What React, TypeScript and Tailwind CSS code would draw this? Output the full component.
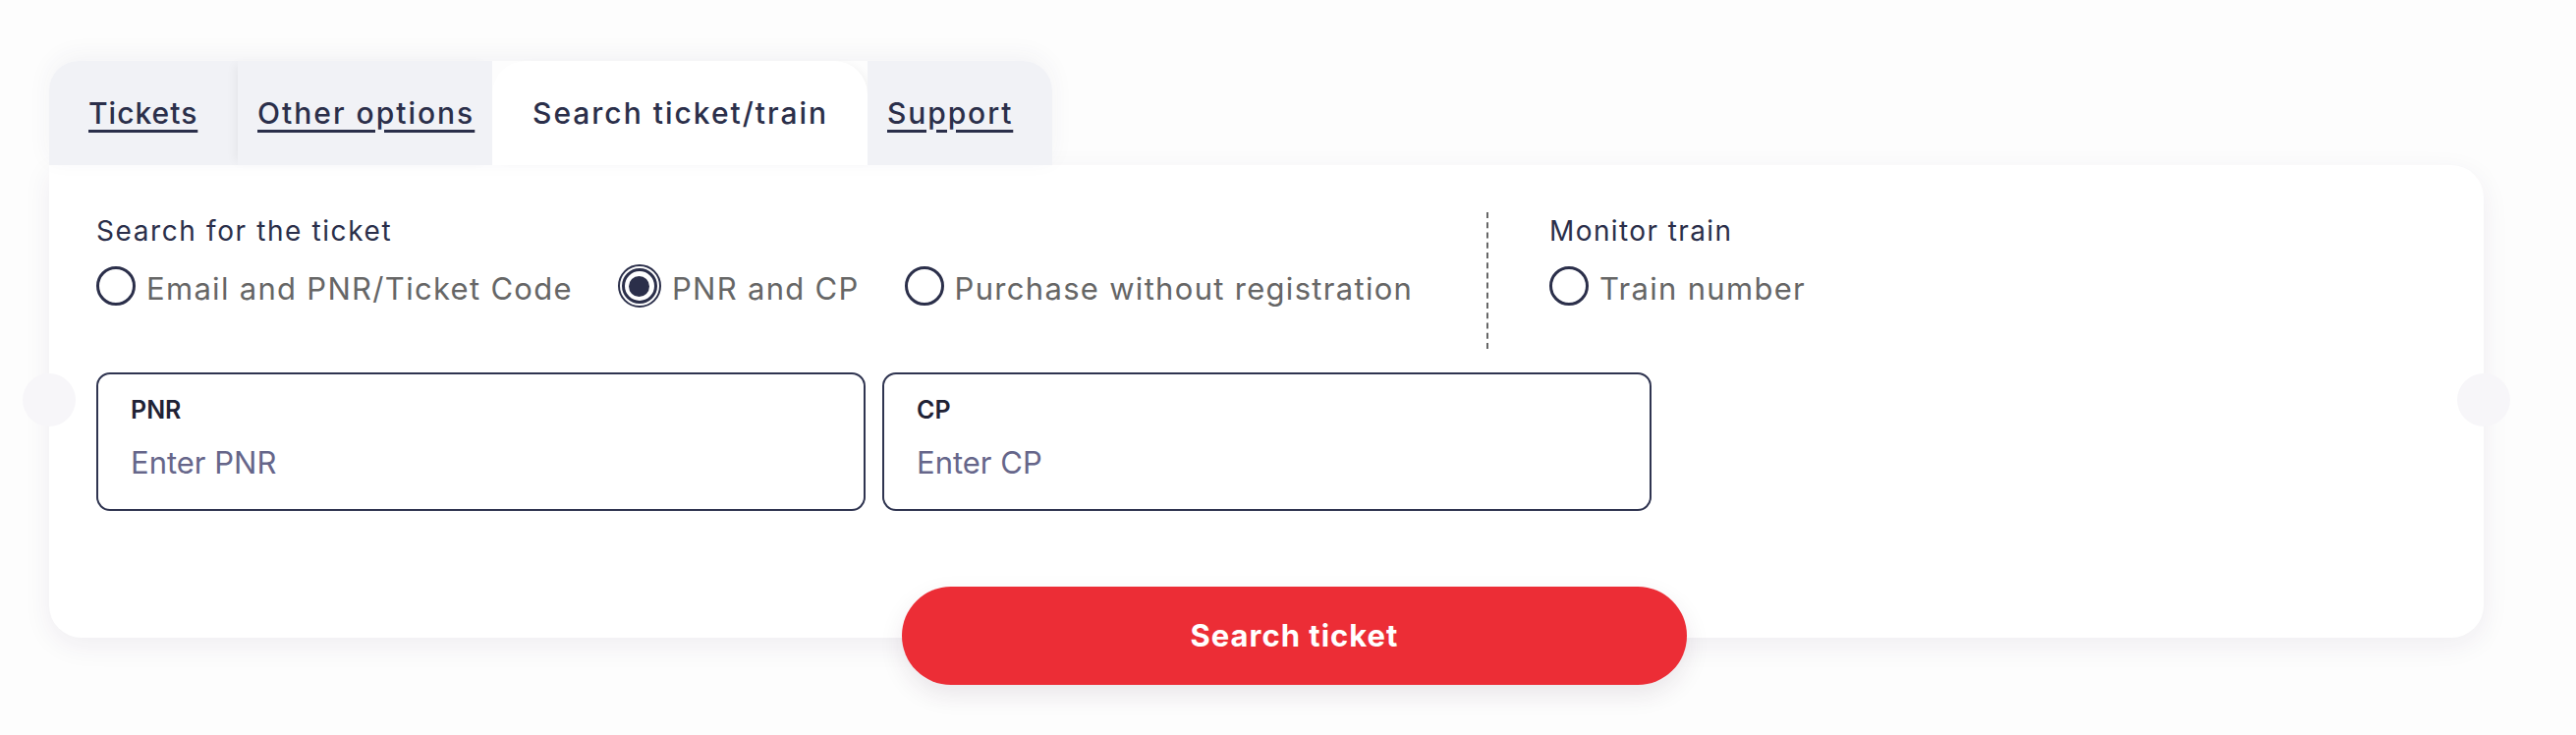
const navy = "#2b2f4a";

function Radio({ label, checked = false }: { label: string; checked?: boolean }) {
  return (
    <label className="flex items-center gap-[11px] mr-[46px]">
      {checked ? (
        <span className="flex h-[44px] w-[44px] items-center justify-center rounded-full border-2 border-[#2b2f4a]">
          <span className="flex h-[36px] w-[36px] items-center justify-center rounded-full border-[3px] border-[#2b2f4a]">
            <span className="h-[21px] w-[21px] rounded-full bg-[#2b2f4a]" />
          </span>
        </span>
      ) : (
        <span className="h-[40px] w-[40px] rounded-full border-[3px] border-[#2b2f4a]" />
      )}
      <span className="pt-[6px] text-[31px] leading-[38px] tracking-[1.3px] text-[#666666]">
        {label}
      </span>
    </label>
  );
}

function Field({ label, placeholder }: { label: string; placeholder: string }) {
  return (
    <div className="h-[141px] w-[783px] rounded-[14px] border-2 border-[#2f3450] bg-white pl-[33px] pt-[21px]">
      <div className="text-[25px] font-semibold leading-[30px] text-[#1f2235]">{label}</div>
      <input
        placeholder={placeholder}
        className="mt-[20px] block h-[38px] w-[700px] bg-transparent text-[31px] leading-[38px] outline-none placeholder:text-[#66668a]"
      />
    </div>
  );
}

export default function App() {
  return (
    <div
      className="min-h-[748px] w-[2622px] bg-[#fdfdfd] pl-[50px] pt-[62px] font-['Inter','Liberation_Sans',sans-serif]"
      style={{ color: navy }}
    >
      <div className="w-[2478px]">
        {/* Tabs */}
        <div className="relative z-10 flex h-[106px] w-[1021px] rounded-t-[30px] shadow-[0_-6px_24px_rgba(60,50,90,0.05)]">
          <a className="flex w-[192px] items-center rounded-tl-[30px] bg-[#f1f2f6] pl-[40px] text-[30px] font-medium tracking-[1px] underline decoration-[3px] underline-offset-[6px]">
            Tickets
          </a>
          <a className="flex w-[259px] items-center bg-[#f1f2f6] pl-[20px] text-[30px] font-medium tracking-[2px] underline decoration-[3px] underline-offset-[6px] shadow-[-6px_0_10px_-4px_rgba(0,0,0,0.06)]">
            Other options
          </a>
          <a className="flex w-[382px] items-center rounded-t-[34px] bg-white pl-[41px] text-[30px] font-medium tracking-[2px] shadow-[6px_0_10px_-4px_rgba(0,0,0,0.05)]">
            Search ticket/train
          </a>
          <a className="flex w-[188px] items-center rounded-tr-[30px] bg-[#f1f2f6] pl-[20px] text-[30px] font-medium tracking-[1.9px] underline decoration-[3px] underline-offset-[6px]">
            Support
          </a>
        </div>

        {/* Card */}
        <div className="relative flex flex-col rounded-b-[33px] rounded-tr-[33px] bg-white pl-[48px] pt-[48px] shadow-[0_8px_28px_rgba(50,30,90,0.07)]">
          <span className="absolute left-[-27px] top-[212px] h-[54px] w-[54px] rounded-full bg-[#f7f6f9]" />
          <span className="absolute right-[-27px] top-[212px] h-[54px] w-[54px] rounded-full bg-[#f7f6f9]" />

          <div className="flex h-[139px]">
            <div className="w-[1415px] pt-[2px]">
              <div className="text-[28px] leading-[34px] tracking-[1.6px]">Search for the ticket</div>
              <div className="mt-[17px] flex h-[44px] items-center">
                <Radio label="Email and PNR/Ticket Code" />
                <Radio label="PNR and CP" checked />
                <Radio label="Purchase without registration" />
              </div>
            </div>
            <div className="border-l-2 border-dashed border-[#666666]" />
            <div className="pl-[62px] pt-[2px]">
              <div className="text-[28px] leading-[34px] tracking-[1.4px]">Monitor train</div>
              <div className="mt-[17px] flex h-[44px] items-center">
                <Radio label="Train number" />
              </div>
            </div>
          </div>

          <div className="mt-[24px] flex gap-[17px]">
            <Field label="PNR" placeholder="Enter PNR" />
            <Field label="CP" placeholder="Enter CP" />
          </div>

          <div className="-mb-[48px] mt-[77px] flex pl-[820px]">
            <button className="h-[100px] w-[799px] rounded-full bg-[#ec2d36] text-[31px] font-bold tracking-[1px] text-white shadow-[0_10px_24px_rgba(60,30,60,0.10)]">
              Search ticket
            </button>
          </div>
        </div>
      </div>
    </div>
  );
}
